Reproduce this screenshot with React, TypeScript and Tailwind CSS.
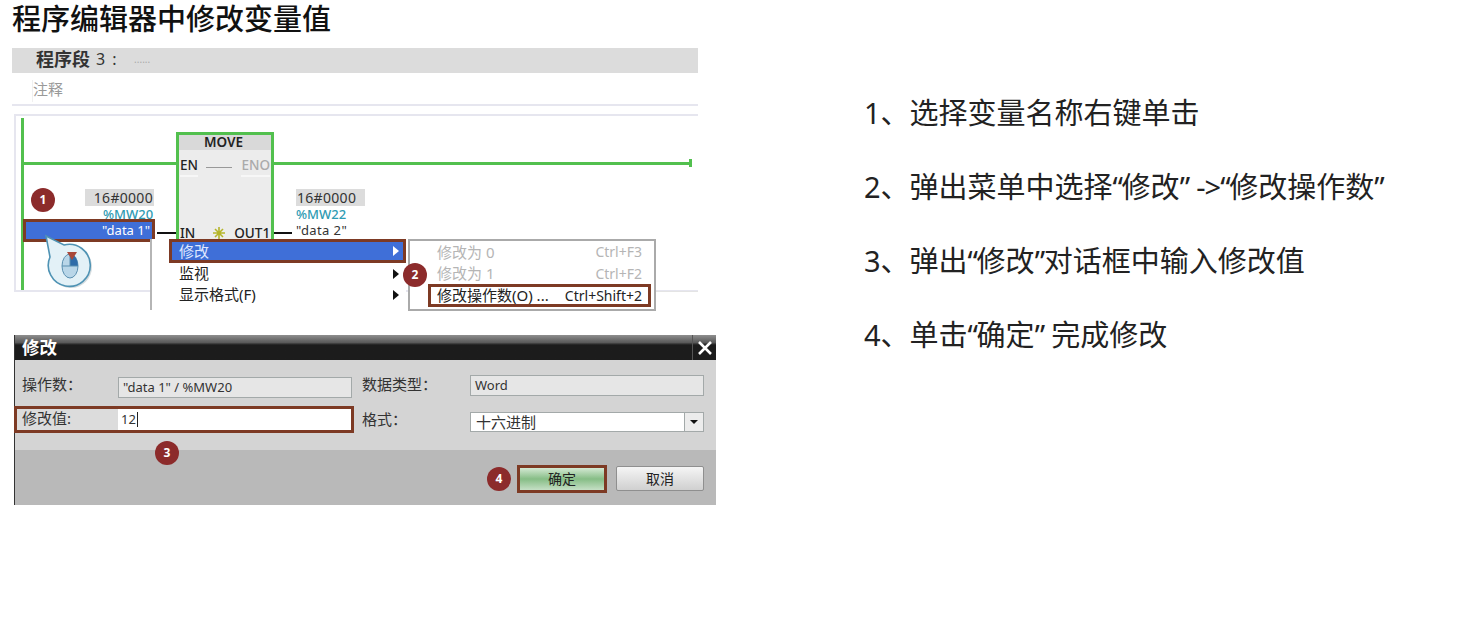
import React from "react";

function Badge({ n, className }: { n: number; className: string }) {
  return (
    <div className={`absolute flex h-[24px] w-[24px] items-center justify-center rounded-full bg-[#8c2b2b] text-[12px] font-bold leading-none text-white ${className}`}>
      {n}
    </div>
  );
}

function Arrow({ className }: { className: string }) {
  return <div className={`h-0 w-0 border-y-[5px] border-l-[6px] border-y-transparent ${className}`} />;
}

function Mouse() {
  return (
    <svg className="absolute left-[22px] top-[118px]" width="64" height="62" viewBox="0 0 64 62">
      <circle cx="37" cy="35" r="21" fill="#b9c4c9" opacity="0.6" />
      <path d="M12 4 L30 13 A21 21 0 1 1 16 25 Z" fill="#e3f1f7" stroke="#4f93b4" strokeWidth="1.6" />
      <ellipse cx="36" cy="34" rx="8" ry="12" fill="#b9d6e8" stroke="#5a8fb0" strokeWidth="1" />
      <path d="M36 22 A8 12 0 0 1 44 34 H36 Z" fill="#2f6ca8" />
      <path d="M28 34 H44 M36 22 V34" stroke="#5a8fb0" strokeWidth="1" />
      <path d="M33 20 H43 L38 28 Z" fill="#a8483a" />
    </svg>
  );
}

function Ladder() {
  return (
    <div className="relative h-[196px] text-[13px] leading-none text-[#333]">
      <div className="absolute left-[2px] top-0 h-[178px] w-[684px] border-y-2 border-l-2 border-y-[#e6e6ef] border-l-[#e6e6ef]" />
      <div className="absolute left-[9px] top-[4px] h-[172px] w-[3px] bg-[#52c04e]" />
      <div className="absolute left-[10px] top-[48px] h-[3px] w-[668px] bg-[#52c04e]" />
      <div className="absolute left-[677px] top-[45px] h-[8px] w-[3px] bg-[#52c04e]" />

      <div className="absolute left-[164px] top-[18px] h-[108px] w-[98px] border-[3px] border-b-0 border-[#52c04e] bg-[#ececec]">
        <div className="flex h-[15px] items-center justify-center bg-[#d9d9d9] pr-[3px] text-[13.5px] font-semibold text-[#222]">MOVE</div>
        <div className="mt-[9px] flex items-center pl-[1px] pr-[1px] text-[13.5px] font-medium">
          <span className="border-b-2 border-[#f7f7f7] pb-[2px] text-[#222]">EN</span>
          <span className="ml-[8px] h-px w-[26px] bg-[#999]" />
          <span className="ml-auto border-b-2 border-[#f7f7f7] pb-[2px] text-[#aaa]">ENO</span>
        </div>
        <div className="mt-[50px] flex items-center pl-[1px] text-[13.5px] font-medium text-[#222]">
          <span>IN</span>
          <svg className="ml-[18px]" width="12" height="12" viewBox="0 0 12 12" stroke="#b5b52a" strokeWidth="1.6">
            <path d="M6 0V12M0 6H12M2 2L10 10M10 2L2 10" />
          </svg>
          <span className="ml-[9px]">OUT1</span>
        </div>
      </div>

      <div className="absolute left-[145px] top-[118px] h-[2px] w-[19px] bg-[#111]" />
      <div className="absolute left-[262px] top-[118px] h-[2px] w-[18px] bg-[#111]" />

      <div className="absolute left-[73px] top-[75px] flex h-[17px] w-[69px] items-center justify-end bg-[#dcdcdc] pr-px text-[14px] tracking-[0.3px]">16#0000</div>
      <div className="absolute left-[91px] top-[94px] font-medium text-[#2f9bb3]">%MW20</div>
      <div className="absolute left-[11px] top-[105px] flex h-[23px] w-[132px] items-center justify-end border-[3px] border-[#7d3a24] bg-[#3f6fd8] pr-[2px] text-white">
        "data 1"
      </div>

      <div className="absolute left-[284px] top-[75px] flex h-[17px] w-[69px] items-center bg-[#dcdcdc] pl-px text-[14px] tracking-[0.3px]">16#0000</div>
      <div className="absolute left-[284px] top-[94px] font-medium text-[#2f9bb3]">%MW22</div>
      <div className="absolute left-[284px] top-[110px] tracking-[0.4px]">"data 2"</div>

      <Badge n={1} className="left-[19px] top-[74px]" />
      <Mouse />

      <div className="absolute left-[138px] top-[125px] h-[71px] w-[256px] border-l-2 border-[#b5b5b5] bg-white pl-[17px] text-[15px] text-[#222]">
        <div className="flex h-[24px] items-center border-[3px] border-[#7d3a24] bg-[#3f6fd8] pl-[7px] pr-[4px] text-[#dfe8ff]">
          修改
          <Arrow className="ml-auto border-l-white" />
        </div>
        <div className="flex h-[21px] items-center pl-[10px] pr-[7px]">
          监视
          <Arrow className="ml-auto border-l-[#111]" />
        </div>
        <div className="flex h-[21px] items-center pl-[10px] pr-[7px]">
          显示格式(F)
          <Arrow className="ml-auto border-l-[#111]" />
        </div>
      </div>

      <div className="absolute left-[396px] top-[125px] h-[72px] w-[248px] border-2 border-[#aaaaaa] bg-white text-[15px] leading-none">
        <div className="flex h-[22px] items-center pl-[27px] pr-[12px] text-[#b5b5b5]">
          修改为 0<span className="ml-auto text-[14px]">Ctrl+F3</span>
        </div>
        <div className="flex h-[21px] items-center pl-[27px] pr-[12px] text-[#b5b5b5]">
          修改为 1<span className="ml-auto text-[14px]">Ctrl+F2</span>
        </div>
        <div className="ml-[18px] mr-[3px] flex h-[23px] items-center border-[3px] border-[#7d3a24] pl-[6px] pr-[6px] text-[#222]">
          修改操作数(O) ...<span className="ml-auto text-[14px]">Ctrl+Shift+2</span>
        </div>
      </div>
      <div className="absolute left-[644px] top-[177px] h-px w-[42px] bg-[#e4e4e4]" />

      <Badge n={2} className="left-[391px] top-[149px]" />
    </div>
  );
}

function Dialog() {
  return (
    <div className="relative ml-[2px] mt-[25px] flex h-[170px] w-[702px] flex-col border-l border-[#333] text-[15px] leading-none text-[#333]">
      <div className="flex h-[25px] bg-gradient-to-b from-[#8f8f8f] via-[#5a5a5a] via-30% to-[#1c1c1c] to-40%">
        <span className="ml-[7px] self-end pb-[4px] text-[17.5px] font-bold text-white">修改</span>
        <div className="ml-auto flex w-[24px] items-center justify-center border-l border-[#555]">
          <svg width="14" height="14" viewBox="0 0 14 14" stroke="white" strokeWidth="2.6">
            <path d="M1 1L13 13M13 1L1 13" />
          </svg>
        </div>
      </div>

      <div className="relative h-[90px] bg-[#d4d4d4]">
        <div className="flex h-[46px] items-start">
          <span className="ml-[7px] mt-[17px] w-[96px]">操作数：</span>
          <div className="mt-[17px] flex h-[21px] w-[234px] items-center border border-[#a3a9a9] bg-[#e6e6e6] pl-[4px] text-[13px]">"data 1" / %MW20</div>
          <span className="ml-[10px] mt-[17px] w-[108px]">数据类型：</span>
          <div className="mt-[15px] flex h-[21px] w-[234px] items-center border border-[#a3a9a9] bg-[#e6e6e6] pl-[4px] text-[13px]">Word</div>
        </div>
        <div className="-ml-px flex items-start">
          <div className="flex h-[27px] w-[340px] items-center border-[3px] border-[#7d3a24] bg-[#dcdcdc] pl-[5px]">
            <span className="w-[96px] pb-[2px]">修改值:</span>
            <div className="flex h-full flex-1 items-center bg-white pl-[3px] text-[13px]">
              12<span className="ml-px h-[15px] w-px bg-[#222]" />
            </div>
          </div>
          <span className="ml-[8px] mt-[6px] w-[108px]">格式：</span>
          <div className="mt-[6px] flex h-[20px] w-[234px] items-center border border-[#a3a9a9] bg-white pl-[5px]">
            十六进制
            <div className="ml-auto flex h-full w-[19px] items-center justify-center border-l border-[#a3a9a9] bg-[#ececec]">
              <div className="h-0 w-0 border-x-[4px] border-t-[4px] border-x-transparent border-t-[#111]" />
            </div>
          </div>
        </div>
      </div>

      <div className="flex flex-1 items-start justify-end bg-[#b9b9b9] pr-[12px] pt-[15px] text-[14px]">
        <div className="flex h-[28px] w-[90px] items-center justify-center border-[3px] border-[#7d3a24] bg-gradient-to-b from-[#d3e8d3] via-[#86bd86] to-[#c5dfc5] text-[#222]">确定</div>
        <div className="ml-[9px] mt-px flex h-[25px] w-[88px] items-center justify-center rounded-[2px] border border-[#8f8f8f] bg-gradient-to-b from-[#f5f5f5] to-[#d0d0d0] text-[#222]">取消</div>
      </div>

      <Badge n={3} className="left-[140px] top-[106px]" />
      <Badge n={4} className="left-[472px] top-[132px]" />
    </div>
  );
}

function Q({ c }: { c: string }) {
  return <span className="tracking-[-1.4px]">{c}</span>;
}

export default function App() {
  return (
    <div className="flex h-[644px] w-[1476px] overflow-hidden bg-white font-['Noto_Sans','Noto_Sans_CJK_SC',sans-serif]">
      <div className="ml-[12px] w-[704px]">
        <h1 className="h-[48px] pt-px text-[29px] font-medium leading-[36px] text-[#111]">程序编辑器中修改变量值</h1>
        <div className="flex h-[25px] w-[686px] items-center bg-[#dcdcdc] pb-[3px] pl-[24px] text-[#333]">
          <span className="text-[18px] font-bold leading-none">程序段</span>
          <span className="ml-[6px] text-[16px] leading-none tracking-[1.5px]">3 :</span>
          <span className="ml-[16px] text-[10px] leading-none text-[#aaa]">......</span>
        </div>
        <div className="mt-[7px] flex h-[26px] w-[686px] items-start border-b-2 border-[#e6e6ef] pl-[20px] text-[15px] text-[#999]">
          <span className="h-[22px] border-l border-[#f0f0f0] leading-[18px]">注释</span>
        </div>
        <div className="mt-[8px]">
          <Ladder />
        </div>
        <Dialog />
      </div>
      <ol className="ml-[148px] mt-[92px] flex flex-col gap-[32px] text-[29px] leading-[42px] text-[#222]">
        <li className="whitespace-nowrap">1、选择变量名称右键单击</li>
        <li className="whitespace-nowrap">
          2、弹出菜单中选择<Q c="“" />修改<Q c="”" /> <span className="tracking-[-1px]">-&gt;</span><Q c="“" />修改操作数<Q c="”" />
        </li>
        <li className="whitespace-nowrap">
          3、弹出<Q c="“" />修改<Q c="”" />对话框中输入修改值
        </li>
        <li className="whitespace-nowrap">
          4、单击<Q c="“" />确定<Q c="”" /> 完成修改
        </li>
      </ol>
    </div>
  );
}
